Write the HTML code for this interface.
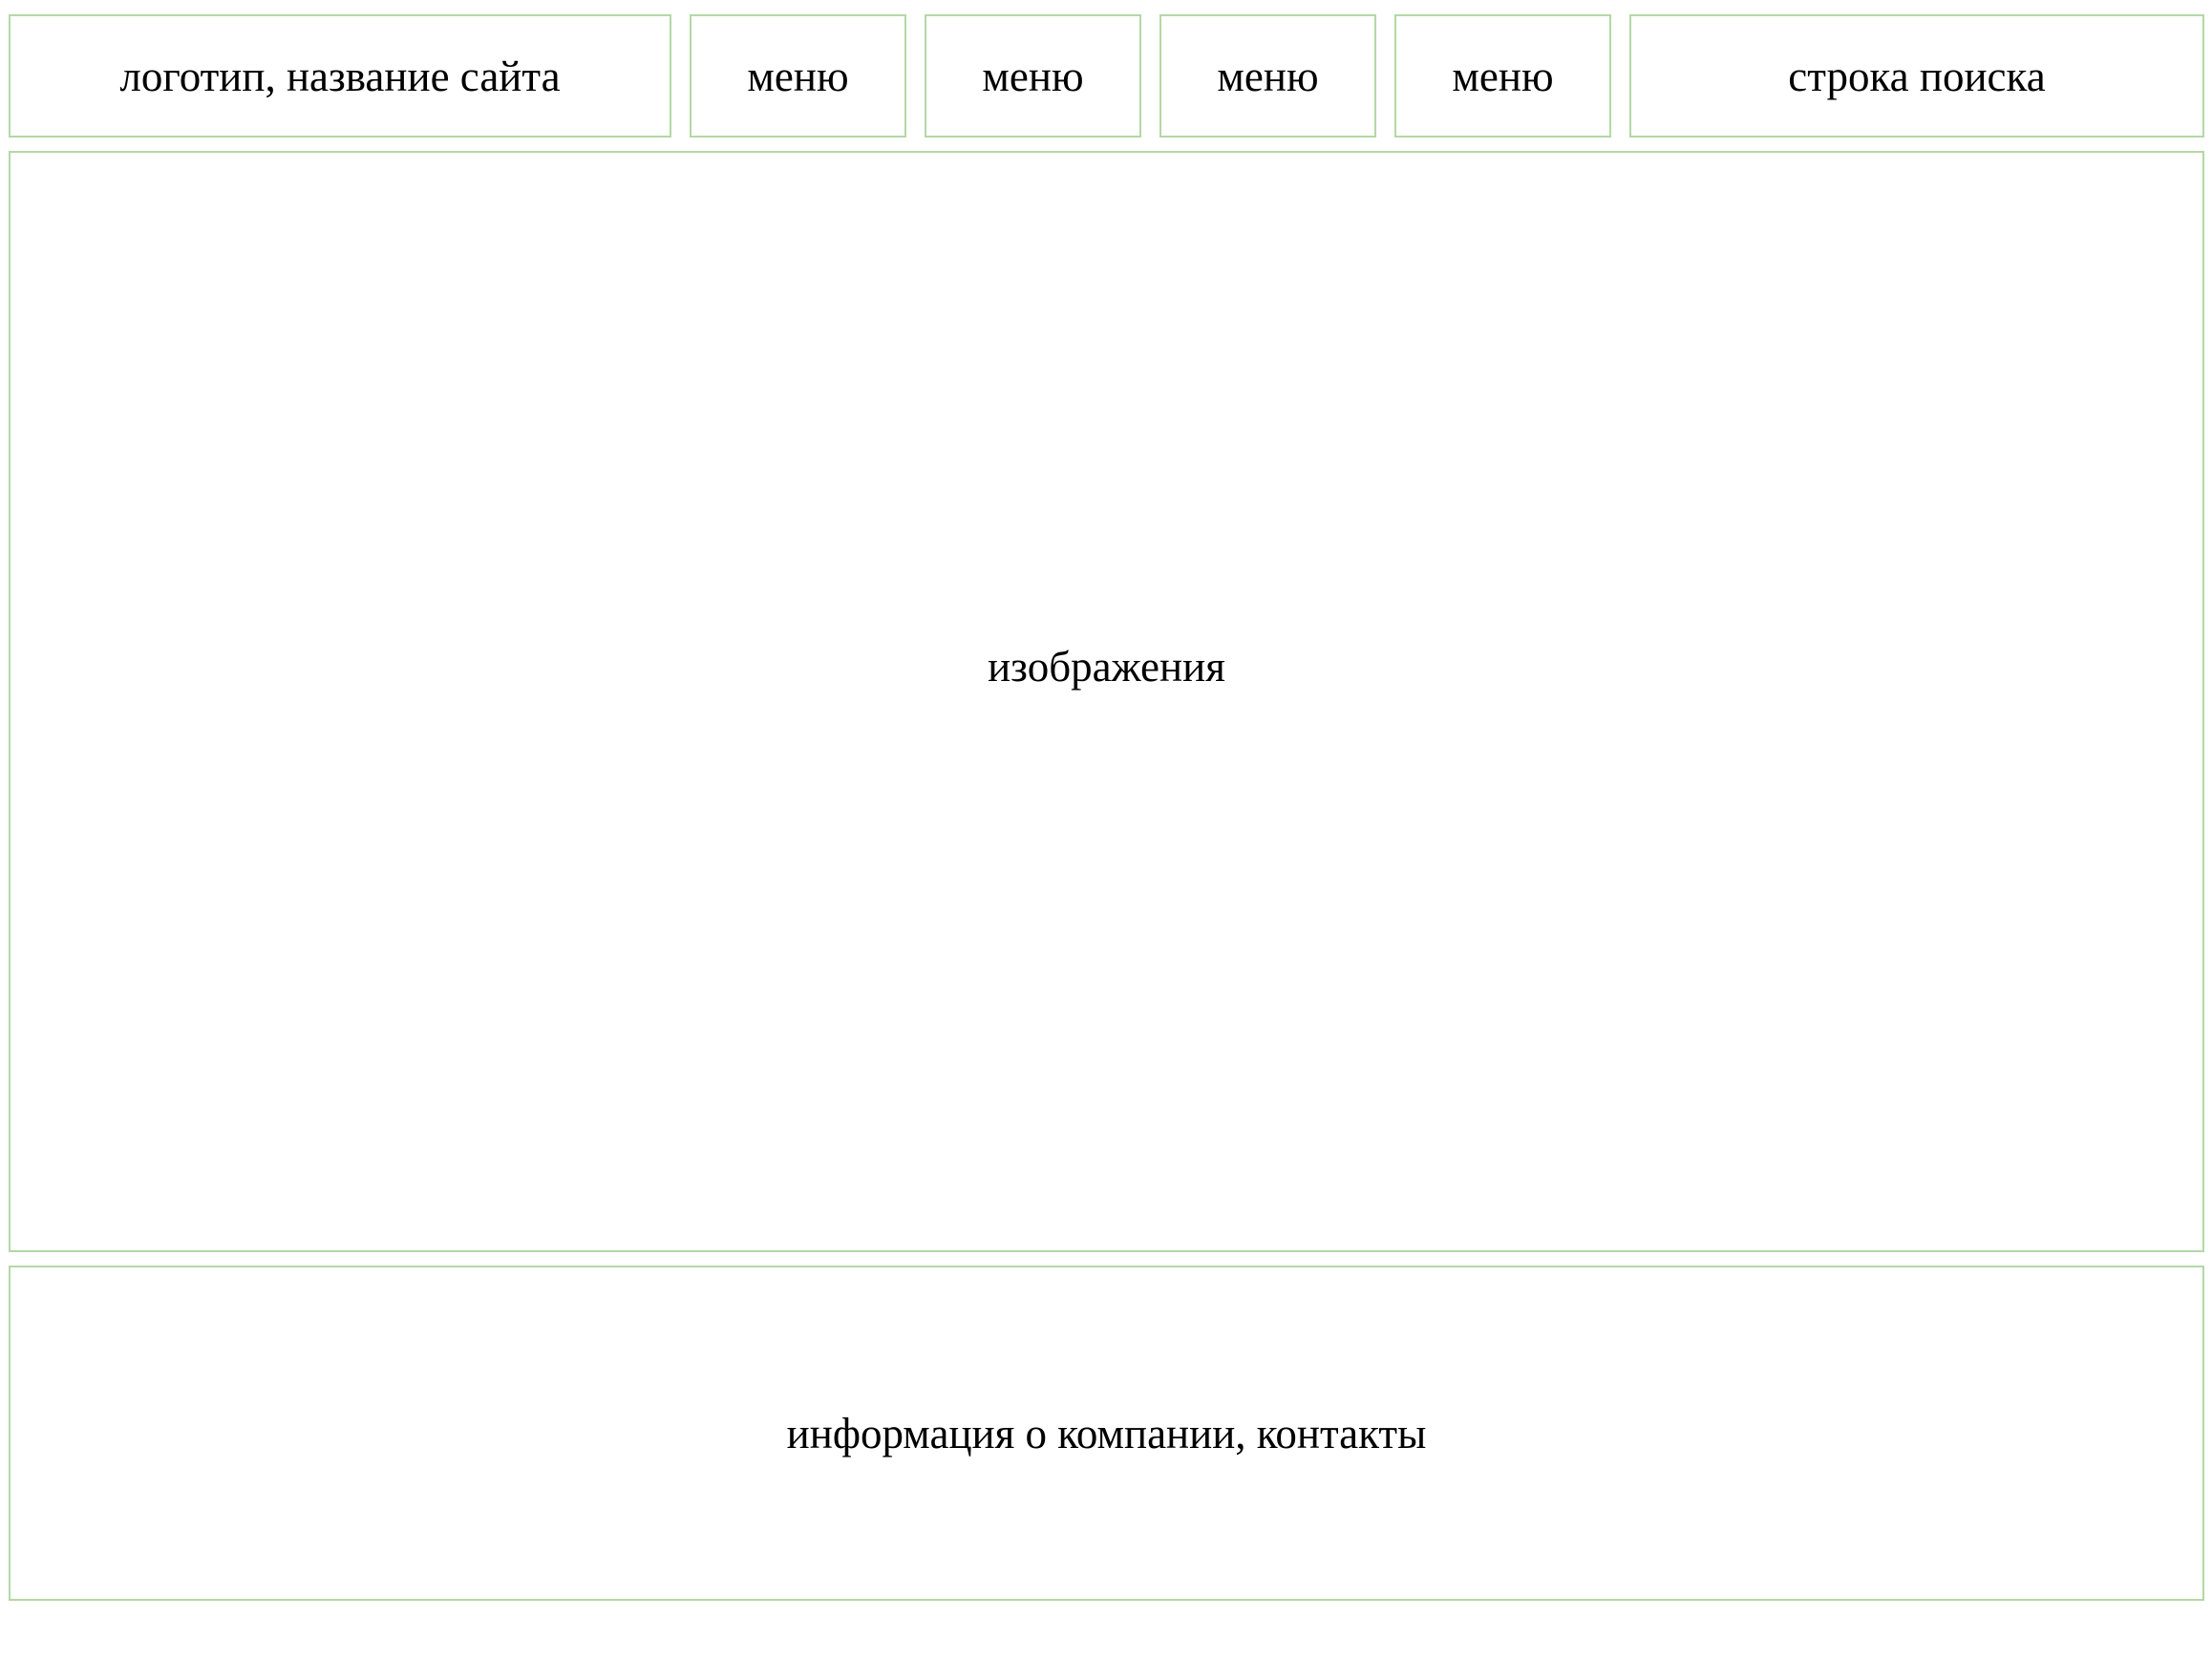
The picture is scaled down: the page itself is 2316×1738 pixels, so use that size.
<!DOCTYPE html>
<html><head><meta charset="utf-8"><style>
html,body{margin:0;padding:0;background:#fff;width:2316px;height:1738px;overflow:hidden}
.b{position:absolute;box-sizing:border-box;border:2px solid #b4d8a6;display:flex;align-items:center;justify-content:center;font-family:"Liberation Serif",serif;font-size:45px;color:#000}
.t{position:absolute;left:0;right:0;text-align:center;font-family:"Liberation Serif",serif;font-size:45px;line-height:52px}
</style></head><body>
<div class="b" style="left:9px;top:15px;width:694px;height:129px">логотип, название сайта</div>
<div class="b" style="left:722px;top:15px;width:227px;height:129px">меню</div>
<div class="b" style="left:968px;top:15px;width:227px;height:129px">меню</div>
<div class="b" style="left:1214px;top:15px;width:227px;height:129px">меню</div>
<div class="b" style="left:1460px;top:15px;width:227px;height:129px">меню</div>
<div class="b" style="left:1706px;top:15px;width:602px;height:129px">строка поиска</div>
<div class="b" style="left:9px;top:158px;width:2299px;height:1153px;display:block"><div class="t" style="top:512px">изображения</div></div>
<div class="b" style="left:9px;top:1325px;width:2299px;height:351px">информация о компании, контакты</div>
</body></html>
